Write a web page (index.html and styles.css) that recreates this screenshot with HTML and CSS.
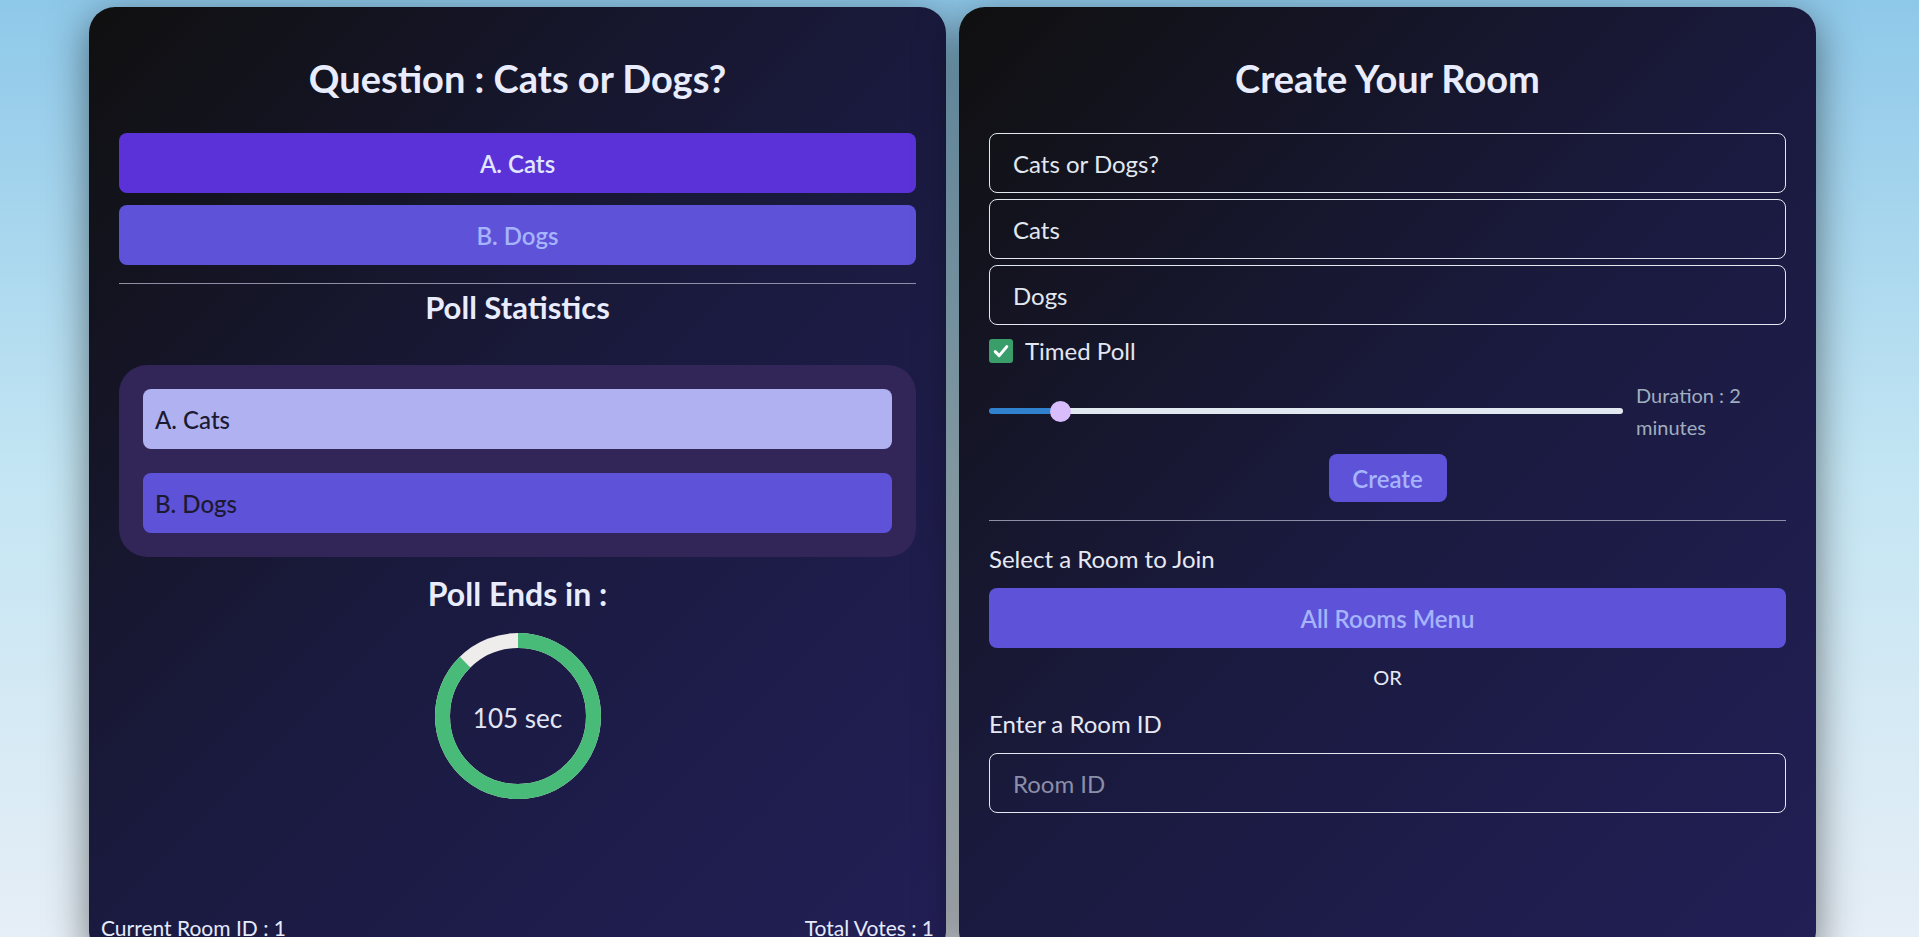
FILE: index.html
```html
<!DOCTYPE html>
<html lang="en">
<head>
<meta charset="utf-8">
<title>Live Poll</title>
<link rel="stylesheet" href="styles.css">
</head>
<body>
<div class="page">
  <section class="panel poll">
    <h1 class="title">Question : Cats or Dogs?</h1>
    <div class="options">
      <button class="opt opt-selected">A. Cats</button>
      <button class="opt">B. Dogs</button>
    </div>
    <hr class="divider">
    <h2 class="subtitle">Poll Statistics</h2>
    <div class="stats">
      <div class="stat-bar stat-a">A. Cats</div>
      <div class="stat-bar stat-b">B. Dogs</div>
    </div>
    <h2 class="subtitle timer-title">Poll Ends in :</h2>
    <div class="timer">
      <svg class="timer-ring" viewBox="0 0 166 166" width="166" height="166">
        <circle cx="83" cy="83" r="75.5" fill="none" stroke="#eeedeb" stroke-width="15"/>
        <circle cx="83" cy="83" r="75.5" fill="none" stroke="#48bb78" stroke-width="15" stroke-dasharray="415.1 474.4" transform="rotate(-90 83 83)"/>
      </svg>
      <span class="timer-label">105 sec</span>
    </div>
    <footer class="panel-footer">
      <span>Current Room ID : 1</span>
      <span>Total Votes : 1</span>
    </footer>
  </section>

  <section class="panel room">
    <h1 class="title">Create Your Room</h1>
    <div class="form">
      <input class="field" type="text" value="Cats or Dogs?">
      <input class="field" type="text" value="Cats">
      <input class="field" type="text" value="Dogs">
    </div>
    <label class="check-row">
      <span class="checkbox">
        <svg viewBox="0 0 24 24" width="24" height="24"><path d="M6.2 12.6 L10.2 16.6 L17.8 7.6" fill="none" stroke="#ffffff" stroke-width="3" stroke-linecap="round" stroke-linejoin="round"/></svg>
      </span>
      <span class="check-text">Timed Poll</span>
    </label>
    <div class="slider-row">
      <input class="range" type="range" min="1" max="11" value="2" style="--fill: 11%">
      <p class="duration">Duration : 2 minutes</p>
    </div>
    <button class="create-btn">Create</button>
    <hr class="divider room-divider">
    <p class="label select-label">Select a Room to Join</p>
    <button class="rooms-btn">All Rooms Menu</button>
    <p class="or">OR</p>
    <p class="label enter-label">Enter a Room ID</p>
    <input class="field room-id" type="text" placeholder="Room ID">
  </section>
</div>
</body>
</html>
```

FILE: styles.css
```css
html, body {
  margin: 0;
  height: 100%;
  overflow: hidden;
}

body {
  background: linear-gradient(to bottom, #8ec8e9 0%, #c3e5f3 50%, #e6eef6 100%);
  font-family: "Segoe UI", Lato, "Open Sans", sans-serif;
}

.page {
  display: flex;
  gap: 13px;
  padding: 7px 0 0 89px;
}

.panel {
  width: 857px;
  height: 950px;
  box-sizing: border-box;
  padding: 48px 30px 14px;
  border-radius: 26px;
  background: linear-gradient(135deg, #101010 0%, #1a1a3f 50%, #221f56 100%);
  box-shadow: 0 10px 40px rgba(0, 0, 0, 0.5);
  display: flex;
  flex-direction: column;
  color: #e6ebfc;
}

.title {
  margin: 0;
  font-size: 38px;
  line-height: 46px;
  font-weight: 700;
  text-align: center;
  color: #e8ecfd;
}

.options {
  margin-top: 32px;
  display: flex;
  flex-direction: column;
  gap: 12px;
}

.opt {
  height: 60px;
  border: none;
  border-radius: 8px;
  background: #5e52d8;
  color: #a5b4fc;
  font-family: inherit;
  font-size: 24px;
  font-weight: 600;
  cursor: pointer;
}

.opt-selected {
  background: #5b32d8;
  color: #e0e7ff;
}

.divider {
  margin: 18px 0 0;
  height: 0;
  border: 0;
  border-top: 1px solid #8e8ea6;
}

.subtitle {
  margin: 5px 0 0;
  font-size: 31px;
  line-height: 36px;
  font-weight: 700;
  text-align: center;
  color: #e8ecfd;
}

.stats {
  margin-top: 40px;
  padding: 24px;
  border-radius: 28px;
  background: #322558;
  display: flex;
  flex-direction: column;
  gap: 24px;
}

.stat-bar {
  height: 60px;
  box-sizing: border-box;
  border-radius: 8px;
  padding-left: 12px;
  display: flex;
  align-items: center;
  font-size: 24px;
  font-weight: 500;
  color: #1b1a30;
}

.stat-a {
  background: #b0b1f1;
}

.stat-b {
  background: #5e52d8;
}

.timer-title {
  margin-top: 19px;
  font-size: 32px;
}

.timer {
  position: relative;
  width: 166px;
  height: 166px;
  margin: 21px auto 0;
}

.timer-ring {
  display: block;
}

.timer-label {
  position: absolute;
  inset: 0;
  padding-top: 4px;
  display: flex;
  align-items: center;
  justify-content: center;
  font-size: 26px;
  color: #e2e6f4;
}

.panel-footer {
  margin: auto -18px 0;
  display: flex;
  justify-content: space-between;
  font-size: 21px;
  line-height: 30px;
  color: #e6ebfc;
}

/* Right panel */

.form {
  margin-top: 32px;
  display: flex;
  flex-direction: column;
  gap: 6px;
}

.field {
  height: 60px;
  box-sizing: border-box;
  border: 1px solid #e2e8f0;
  border-radius: 8px;
  background: transparent;
  padding: 0 23px;
  font-family: inherit;
  font-size: 24px;
  color: #e2e8f0;
  outline: none;
}

.field::placeholder {
  color: #8a8ea8;
}

.check-row {
  margin-top: 12px;
  display: flex;
  align-items: center;
  gap: 12px;
  height: 24px;
  padding-top: 2px;
}

.checkbox {
  width: 24px;
  height: 24px;
  border-radius: 3px;
  background: #3a9e6a;
  display: flex;
}

.check-text {
  font-size: 24px;
  line-height: 24px;
  color: #e2e6f2;
}

.slider-row {
  margin-top: 16px;
  display: flex;
  align-items: center;
  height: 64px;
}

.range {
  -webkit-appearance: none;
  appearance: none;
  flex: 1;
  min-width: 0;
  height: 20px;
  margin: 0;
  background: transparent;
}

.range::-webkit-slider-runnable-track {
  height: 6px;
  border-radius: 3px;
  background: linear-gradient(to right, #3182ce 0, #3182ce var(--fill), #e2e8f0 var(--fill));
}

.range::-webkit-slider-thumb {
  -webkit-appearance: none;
  appearance: none;
  width: 21px;
  height: 21px;
  margin-top: -7.5px;
  border-radius: 50%;
  border: none;
  background: #d9bcfb;
}

.duration {
  margin: 0 0 0 13px;
  width: 150px;
  font-size: 20px;
  line-height: 32px;
  color: #a0aec0;
}

.create-btn {
  align-self: center;
  margin-top: 11px;
  width: 118px;
  height: 48px;
  border: none;
  border-radius: 8px;
  background: #5e52d8;
  color: #a5b4fc;
  font-family: inherit;
  font-size: 24px;
  font-weight: 600;
}

.room-divider {
  margin-top: 18px;
}

.label {
  margin: 0;
  font-size: 24px;
  line-height: 32px;
  color: #e6e9f4;
}

.select-label {
  margin-top: 22px;
}

.rooms-btn {
  margin-top: 13px;
  height: 60px;
  border: none;
  border-radius: 8px;
  background: #5e52d8;
  color: #a5b4fc;
  font-family: inherit;
  font-size: 24px;
  font-weight: 600;
}

.or {
  margin: 14px 0 0;
  font-size: 20px;
  line-height: 30px;
  text-align: center;
  color: #e6e9f4;
}

.enter-label {
  margin-top: 16px;
}

.room-id {
  margin-top: 13px;
}
```
